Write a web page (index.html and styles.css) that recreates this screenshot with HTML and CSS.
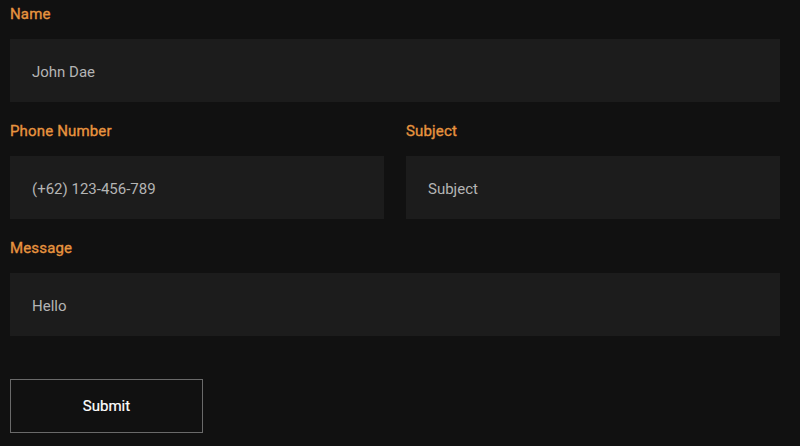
FILE: index.html
```html
<!DOCTYPE html>
<html>
<head>
<meta charset="utf-8">
<link rel="stylesheet" href="styles.css">
</head>
<body>
<form class="form">
  <div class="group">
    <label class="label">Name</label>
    <input class="field" type="text" value="John Dae">
  </div>
  <div class="row">
    <div class="group">
      <label class="label">Phone Number</label>
      <input class="field" type="text" value="(+62) 123-456-789">
    </div>
    <div class="group">
      <label class="label">Subject</label>
      <input class="field" type="text" value="Subject">
    </div>
  </div>
  <div class="group">
    <label class="label">Message</label>
    <input class="field" type="text" value="Hello">
  </div>
  <button class="submit" type="button">Submit</button>
</form>
</body>
</html>
```
FILE: styles.css
```css
html, body {
  margin: 0;
  padding: 0;
  background: #111111;
  font-family: Roboto, "Liberation Sans", sans-serif;
}
.form {
  width: 770px;
  padding: 4px 0 0 10px;
  display: flex;
  flex-direction: column;
  gap: 19px;
}
.row {
  display: grid;
  grid-template-columns: 374px 374px;
  gap: 22px;
}
.group {
  display: flex;
  flex-direction: column;
}
.label {
  font-size: 15px;
  line-height: 20px;
  font-weight: 400;
  letter-spacing: 0.15px;
  -webkit-text-stroke: 0.35px #e8943f;
  color: #e8943f;
  margin-bottom: 15px;
}
.field {
  box-sizing: border-box;
  height: 63px;
  width: 100%;
  border: none;
  outline: none;
  background: #1c1c1c;
  padding: 2px 22px 0;
  margin: 0;
  font-family: Roboto, "Liberation Sans", sans-serif;
  font-size: 15px;
  color: #b4b4b4;
}
.submit {
  margin-top: 24px;
  box-sizing: border-box;
  width: 193px;
  height: 54px;
  background: #111111;
  border: 1px solid #6a6a6a;
  color: #ffffff;
  font-family: Roboto, "Liberation Sans", sans-serif;
  font-size: 15px;
  font-weight: 400;
  -webkit-text-stroke: 0.2px #ffffff;
  padding: 0;
}
```
